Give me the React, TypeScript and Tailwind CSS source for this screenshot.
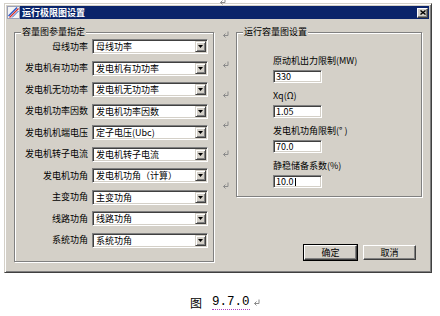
import React from "react";

const leftRows = [
  { label: "母线功率", value: "母线功率" },
  { label: "发电机有功功率", value: "发电机有功功率" },
  { label: "发电机无功功率", value: "发电机无功功率" },
  { label: "发电机功率因数", value: "发电机功率因数" },
  { label: "发电机机端电压", value: "定子电压(Ubc)" },
  { label: "发电机转子电流", value: "发电机转子电流" },
  { label: "发电机功角", value: "发电机功角（计算）" },
  { label: "主变功角", value: "主变功角" },
  { label: "线路功角", value: "线路功角" },
  { label: "系统功角", value: "系统功角" },
];

const rightFields = [
  { label: "原动机出力限制(MW)", value: "330" },
  { label: "Xq(Ω)", value: "1.05" },
  { label: "发电机功角限制(° )", value: "70.0" },
  { label: "静稳储备系数(%)", value: "10.0", caret: true },
];

// paragraph marks from the word document behind the picture
const marks = [
  { x: 219, y: -2 },
  { x: 222, y: 31 },
  { x: 222, y: 61 },
  { x: 222, y: 91 },
  { x: 222, y: 121 },
  { x: 222, y: 150 },
  { x: 222, y: 182 },
];

function ReturnMark({ className = "" }: { className?: string }) {
  return (
    <svg className={className} width="7" height="7" viewBox="0 0 7 7" fill="none" stroke="#8a8a8a" strokeWidth="1">
      <path d="M6 0.5 V4.5 H1.5" />
      <path d="M3.5 2.5 L1.5 4.5 L3.5 6.5" />
    </svg>
  );
}

function Sunken({ children, className = "" }: { children: React.ReactNode; className?: string }) {
  return (
    <div
      className={`flex items-center border border-t-[#808080] border-l-[#808080] border-r-white border-b-white bg-white shadow-[inset_1px_1px_0_#404040,inset_-1px_-1px_0_#d4d0c8] ${className}`}
    >
      {children}
    </div>
  );
}

function Select({ value }: { value: string }) {
  return (
    <Sunken className="h-[15px] w-[116px] justify-between">
      <span className="whitespace-nowrap pl-[3px] leading-[11px]">{value}</span>
      <div className="mr-[1px] flex h-[11px] w-[11px] shrink-0 items-center justify-center border border-t-[#d4d0c8] border-l-[#d4d0c8] border-r-[#404040] border-b-[#404040] bg-[#d4d0c8] shadow-[inset_1px_1px_0_#fff,inset_-1px_-1px_0_#808080]">
        <svg width="5" height="3" viewBox="0 0 5 3">
          <path d="M0 0 H5 L2.5 3 Z" fill="#000" />
        </svg>
      </div>
    </Sunken>
  );
}

function GroupBox({ title, className = "", children }: { title: string; className?: string; children: React.ReactNode }) {
  return (
    <div className={`relative border border-[#808080] shadow-[inset_1px_1px_0_#fff,1px_1px_0_#fff] ${className}`}>
      <span className="absolute -top-[7px] left-[6px] bg-[#d4d0c8] px-[1px] leading-[12px]">{title}</span>
      {children}
    </div>
  );
}

function Button({ label, isDefault }: { label: string; isDefault?: boolean }) {
  return (
    <div className={isDefault ? "border border-black" : "border border-transparent"}>
      <div className="flex h-[15px] w-[53px] items-center justify-center border border-t-white border-l-white border-r-[#404040] border-b-[#404040] bg-[#d4d0c8] leading-[12px] shadow-[inset_-1px_-1px_0_#808080]">
        {label}
      </div>
    </div>
  );
}

function Dialog() {
  return (
    <div className="flex h-[270px] w-[428px] flex-col border border-t-[#d4d0c8] border-l-[#d4d0c8] border-r-[#404040] border-b-[#404040] bg-[#d4d0c8] p-[2px] shadow-[inset_1px_1px_0_#fff,inset_-1px_-1px_0_#808080]">
      <div className="flex h-[13px] items-center bg-[#0a246a] pr-[1px] text-white">
        <svg width="13" height="13" viewBox="0 0 13 13" className="shrink-0">
          <rect x="0.5" y="0.5" width="12" height="12" fill="#f4f4f4" stroke="#9aa0b8" />
          <path d="M1.5 10 L10 1.5" stroke="#2a58c8" strokeWidth="1.4" />
          <path d="M2.5 11.5 L11.5 2.5" stroke="#d03030" strokeWidth="1.2" />
          <path d="M5 11.5 L11.5 5" stroke="#2a58c8" strokeWidth="1" />
        </svg>
        <span className="ml-[2px] font-bold leading-[12px]">运行极限图设置</span>
        <div className="ml-auto flex h-[10px] w-[11px] items-center justify-center border border-t-white border-l-white border-r-[#404040] border-b-[#404040] bg-[#d4d0c8] shadow-[inset_-1px_-1px_0_#808080]">
          <svg width="6" height="5" viewBox="0 0 6 5">
            <path d="M0.5 0.5 L5.5 4.5 M5.5 0.5 L0.5 4.5" stroke="#000" strokeWidth="1.4" />
          </svg>
        </div>
      </div>

      <div className="mt-[13px] flex gap-[22px] pl-[7px]">
        <GroupBox title="容量图参量指定" className="h-[230px] w-[200px]">
          <div className="flex flex-col pt-[3px]">
            {leftRows.map((r) => (
              <div key={r.label} className="flex h-[21.5px] items-center">
                <span className="w-[73px] whitespace-nowrap text-right leading-[12px]">{r.label}</span>
                <div className="ml-[4px]">
                  <Select value={r.value} />
                </div>
              </div>
            ))}
          </div>
        </GroupBox>

        <div className="flex h-[230px] w-[186px] flex-col">
          <GroupBox title="运行容量图设置" className="h-[165px]">
            <div className="flex flex-col gap-[7px] pl-[36px] pt-[22px]">
              {rightFields.map((f) => (
                <div key={f.label} className="flex flex-col gap-[3px]">
                  <span className="h-[12px] leading-[12px]">{f.label}</span>
                  <Sunken className="h-[13px] w-[49px]">
                    <span className="pl-[2px] leading-[10px]">{f.value}</span>
                    {f.caret && <span className="ml-[1px] h-[8px] w-px bg-black" />}
                  </Sunken>
                </div>
              ))}
            </div>
          </GroupBox>
          <div className="mt-auto flex justify-end gap-[4px] pb-[1px] pr-[5px]">
            <Button label="确定" isDefault />
            <Button label="取消" />
          </div>
        </div>
      </div>
    </div>
  );
}

export default function App() {
  return (
    <div className="relative h-[316px] w-[440px] overflow-hidden bg-white font-['Noto_Sans_CJK_SC',sans-serif] text-[9px] text-black">
      <div className="pl-[4px] pt-[3px]">
        <Dialog />
      </div>

      <div className="mt-[22px] flex items-center pl-[190px]">
        <span className="text-[12px] leading-[14px]">图</span>
        <span className="ml-[10px] border-b border-dotted border-[#b040c0] font-['Liberation_Mono',monospace] text-[12.5px] leading-[14px]">
          9.7.0
        </span>
        <ReturnMark className="ml-[3px]" />
      </div>

      {marks.map((m, i) => (
        <div key={i} className="absolute" style={{ left: m.x, top: m.y }}>
          <ReturnMark />
        </div>
      ))}
    </div>
  );
}
